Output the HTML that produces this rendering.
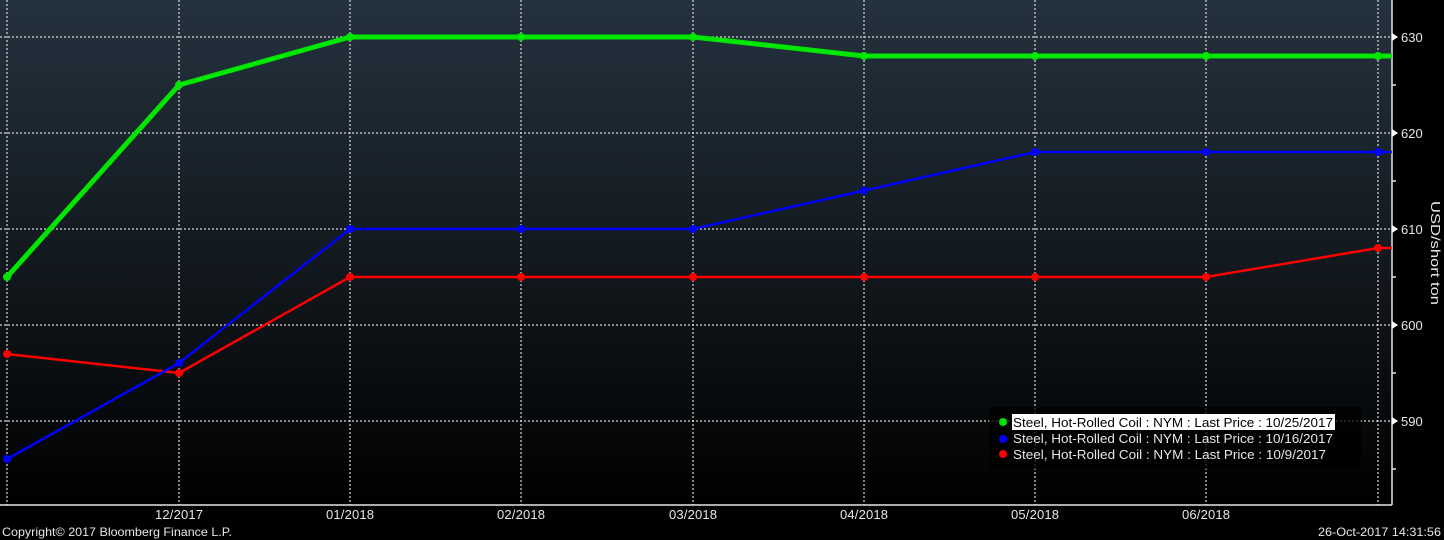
<!DOCTYPE html>
<html><head><style>
html,body{margin:0;padding:0;background:#000;}
svg{display:block;}
text{font-family:"Liberation Sans","DejaVu Sans",sans-serif;fill:#e6e6e6;}
</style></head><body>
<svg width="1444" height="540" viewBox="0 0 1444 540" xmlns="http://www.w3.org/2000/svg">
<defs><linearGradient id="g" x1="0" y1="0" x2="0" y2="1">
<stop offset="0" stop-color="#24323e"/><stop offset="0.55" stop-color="#11171c"/><stop offset="1" stop-color="#000"/></linearGradient></defs>
<rect width="1444" height="540" fill="#000"/>
<rect x="0" y="0" width="1392" height="505" fill="url(#g)"/>
<g stroke="#d8d8d8" stroke-width="1.2" stroke-dasharray="2,2" fill="none">
<line x1="7" y1="0" x2="7" y2="505"/><line x1="179" y1="0" x2="179" y2="505"/><line x1="350" y1="0" x2="350" y2="505"/><line x1="521" y1="0" x2="521" y2="505"/><line x1="693" y1="0" x2="693" y2="505"/><line x1="864" y1="0" x2="864" y2="505"/><line x1="1035" y1="0" x2="1035" y2="505"/><line x1="1206" y1="0" x2="1206" y2="505"/><line x1="1378" y1="0" x2="1378" y2="505"/>
<line x1="0" y1="37" x2="1392" y2="37"/><line x1="0" y1="133" x2="1392" y2="133"/><line x1="0" y1="229" x2="1392" y2="229"/><line x1="0" y1="325" x2="1392" y2="325"/><line x1="0" y1="421" x2="1392" y2="421"/>
</g>
<line x1="1392" y1="0" x2="1392" y2="505" stroke="#e6e6e6" stroke-width="1.5"/>
<line x1="0" y1="505" x2="1392" y2="505" stroke="#e6e6e6" stroke-width="1.5"/>
<g stroke="#e6e6e6" stroke-width="1.5">
<line x1="1392" y1="85" x2="1396" y2="85"/><line x1="1392" y1="181" x2="1396" y2="181"/><line x1="1392" y1="277" x2="1396" y2="277"/><line x1="1392" y1="373" x2="1396" y2="373"/><line x1="1392" y1="469" x2="1396" y2="469"/>
</g>
<g fill="#fff">
<polygon points="1392,33 1398,37 1392,41"/><polygon points="1392,129 1398,133 1392,137"/><polygon points="1392,225 1398,229 1392,233"/><polygon points="1392,321 1398,325 1392,329"/><polygon points="1392,417 1398,421 1392,425"/>
</g>
<g font-size="13">
<text x="1401" y="42">630</text><text x="1401" y="138">620</text><text x="1401" y="234">610</text><text x="1401" y="330">600</text><text x="1401" y="426">590</text>
</g>
<text transform="translate(1431,253) rotate(90)" font-size="13" text-anchor="middle" textLength="104" lengthAdjust="spacingAndGlyphs">USD/short ton</text>
<polyline fill="none" stroke="#ff0000" stroke-width="2.5" points="7,354 179,373 350,277 521,277 693,277 864,277 1035,277 1206,277 1378,248 1392,248"/>
<polyline fill="none" stroke="#0000ff" stroke-width="2.5" points="7,459 179,363 350,229 521,229 693,229 864,190.6 1035,152 1206,152 1378,152 1392,152"/>
<polyline fill="none" stroke="#00e600" stroke-width="5" stroke-linejoin="round" points="7,277 179,85 350,37 521,37 693,37 864,56 1035,56 1206,56 1378,56 1392,56"/>
<g fill="#ff0000"><circle cx="7" cy="354" r="4"/><circle cx="179" cy="373" r="4"/><circle cx="350" cy="277" r="4"/><circle cx="521" cy="277" r="4"/><circle cx="693" cy="277" r="4"/><circle cx="864" cy="277" r="4"/><circle cx="1035" cy="277" r="4"/><circle cx="1206" cy="277" r="4"/><circle cx="1378" cy="248" r="4"/></g>
<g fill="#0000ff"><circle cx="7" cy="459" r="4"/><circle cx="179" cy="363" r="4"/><circle cx="350" cy="229" r="4"/><circle cx="521" cy="229" r="4"/><circle cx="693" cy="229" r="4"/><circle cx="864" cy="190.6" r="4"/><circle cx="1035" cy="152" r="4"/><circle cx="1206" cy="152" r="4"/><circle cx="1378" cy="152" r="4"/></g>
<g fill="#00e600"><circle cx="7" cy="277" r="4"/><circle cx="179" cy="85" r="4"/><circle cx="350" cy="37" r="4"/><circle cx="521" cy="37" r="4"/><circle cx="693" cy="37" r="4"/><circle cx="864" cy="56" r="4"/><circle cx="1035" cy="56" r="4"/><circle cx="1206" cy="56" r="4"/><circle cx="1378" cy="56" r="4"/></g>
<rect x="989" y="407" width="372" height="62" rx="3" fill="#000" fill-opacity="0.75"/>
<rect x="1012" y="414" width="323" height="16" fill="#fff"/>
<circle cx="1003" cy="422" r="4" fill="#00e600"/><circle cx="1003" cy="439" r="4" fill="#0000ff"/><circle cx="1003" cy="454" r="4" fill="#ff0000"/>
<g font-size="13">
<text x="1013" y="427" style="fill:#000" textLength="320" lengthAdjust="spacingAndGlyphs">Steel, Hot-Rolled Coil : NYM : Last Price : 10/25/2017</text>
<text x="1013" y="443" textLength="320" lengthAdjust="spacingAndGlyphs">Steel, Hot-Rolled Coil : NYM : Last Price : 10/16/2017</text>
<text x="1013" y="459" textLength="313" lengthAdjust="spacingAndGlyphs">Steel, Hot-Rolled Coil : NYM : Last Price : 10/9/2017</text>
</g>
<g font-size="13">
<text x="155" y="519" textLength="48">12/2017</text><text x="326" y="519" textLength="48">01/2018</text><text x="497" y="519" textLength="48">02/2018</text><text x="669" y="519" textLength="48">03/2018</text><text x="840" y="519" textLength="48">04/2018</text><text x="1011" y="519" textLength="48">05/2018</text><text x="1182" y="519" textLength="48">06/2018</text>
</g>
<text x="2" y="536" font-size="12" textLength="230" lengthAdjust="spacingAndGlyphs">Copyright© 2017 Bloomberg Finance L.P.</text>
<text x="1318" y="536" font-size="12" textLength="123" lengthAdjust="spacingAndGlyphs">26-Oct-2017 14:31:56</text>
</svg>
</body></html>
